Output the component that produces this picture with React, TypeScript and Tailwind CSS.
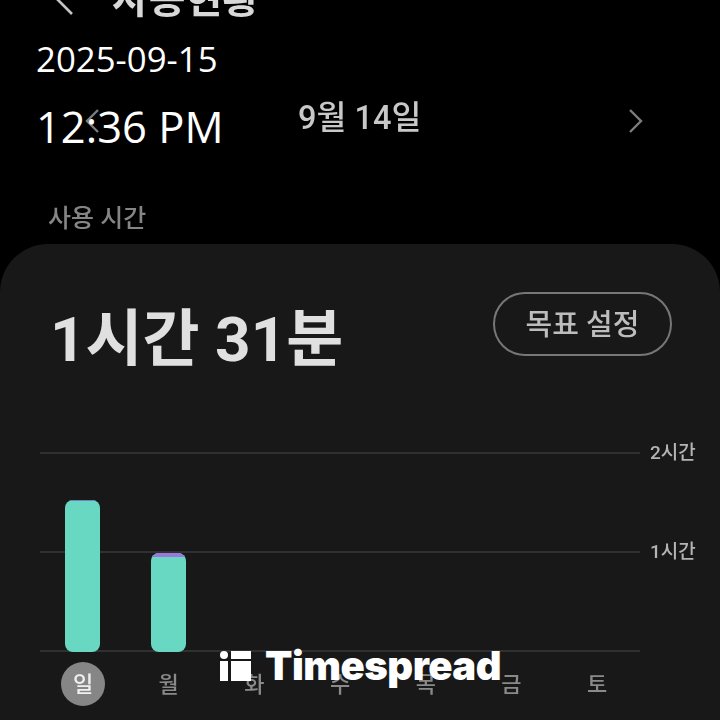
const FONT = '"Roboto", "Noto Sans CJK KR", sans-serif';

const DAYS = [
  { label: "일", active: true, height: 152, cap: "bg-[#6f7fc8]", capH: 1 },
  { label: "월", active: false, height: 99, cap: "bg-[#9a78dc]", capH: 4 },
  { label: "화", active: false, height: 0, cap: "", capH: 0 },
  { label: "수", active: false, height: 0, cap: "", capH: 0 },
  { label: "목", active: false, height: 0, cap: "", capH: 0 },
  { label: "금", active: false, height: 0, cap: "", capH: 0 },
  { label: "토", active: false, height: 0, cap: "", capH: 0 },
];

function Chevron({ dir }: { dir: "left" | "right" }) {
  return (
    <svg width="16" height="26" viewBox="0 0 16 26" fill="none">
      <path
        d={dir === "left" ? "M14 2 L3 13 L14 24" : "M2 2 L13 13 L2 24"}
        stroke="#7d7d7d"
        strokeWidth="2.4"
      />
    </svg>
  );
}

function GridLine({ label }: { label?: string }) {
  return (
    <div className="flex h-[2px] items-center">
      <div className="h-[2px] w-[600px] bg-[#303030]" />
      {label && (
        <span className="ml-[10px] whitespace-nowrap text-[19px] font-medium text-[#b4b4b4]">
          {label}
        </span>
      )}
    </div>
  );
}

function UsageScreen() {
  return (
    <div className="blur-[0.6px]">
      <div className="mt-[-18px] flex h-[36px] items-center pl-[54px]">
        <svg width="20" height="36" viewBox="0 0 20 36" fill="none">
          <path d="M18 2 L3 17 L18 32" stroke="#c4c4c4" strokeWidth="2.6" />
        </svg>
        <span className="ml-[38px] text-[40px] font-bold leading-none text-[#d8d8d8]">
          사용현황
        </span>
      </div>

      <div className="mt-[85px] flex h-[36px] items-center pl-[84px] pr-[76px]">
        <Chevron dir="left" />
        <span className="mb-[6px] ml-[198px] mr-auto whitespace-nowrap text-[32.5px] font-medium leading-none text-[#c8c8c8]">
          9월 14일
        </span>
        <Chevron dir="right" />
      </div>

      <div className="mt-[65px] pl-[48px] text-[25px] font-medium leading-[30px] text-[#858585]">
        사용 시간
      </div>

      <div className="mt-[10px] h-[500px] rounded-t-[48px] bg-[#181818] pl-[40px] pt-[48px]">
        <div className="flex h-[64px] items-center justify-between pr-[48px]">
          <span className="ml-[10px] mt-[32px] text-[62px] font-bold leading-none text-[#e0e0e0]">
            1시간 31분
          </span>
          <button
            type="button"
            className="h-[64px] w-[179px] rounded-full border-2 border-[#777777] pt-[3px] text-[29px] font-medium text-[#bdbdbd]"
          >
            목표 설정
          </button>
        </div>

        <div className="relative mt-[96px] flex h-[200px] flex-col justify-between">
          <GridLine label="2시간" />
          <GridLine label="1시간" />
          <GridLine />
          <div className="absolute bottom-0 left-[25px] flex items-end gap-[51px]">
            {DAYS.slice(0, 2).map((d) => (
              <div
                key={d.label}
                className="w-[35px] overflow-hidden rounded-[8px] bg-[#68d8c2]"
                style={{ height: d.height }}
              >
                <div className={d.cap} style={{ height: d.capH }} />
              </div>
            ))}
          </div>
        </div>

        <div className="mt-[10px] flex pl-[21px]">
          {DAYS.map((d) => (
            <div
              key={d.label}
              className={`mr-[41.7px] flex h-[44px] w-[44px] shrink-0 items-center justify-center rounded-full text-[22px] font-medium ${
                d.active ? "bg-[#868686] font-bold text-[#efefef]" : "text-[#8a8a8a]"
              }`}
            >
              {d.label}
            </div>
          ))}
        </div>
      </div>
    </div>
  );
}

export default function App() {
  return (
    <div
      className="relative h-[720px] w-[720px] overflow-hidden bg-black"
      style={{ fontFamily: FONT }}
    >
      <UsageScreen />

      {/* burned-in timestamp */}
      <div className="absolute left-[36px] top-[38px] font-normal text-white" style={{ fontFamily: '"Open Sans", sans-serif' }}>
        <div className="text-[34.8px] leading-[42px]">2025-09-15</div>
        <div className="mt-[19px] text-[43.5px] leading-[56px]">12:36 PM</div>
      </div>

      {/* watermark */}
      <div className="absolute left-[220px] top-[646px] flex items-center gap-[14px] text-white">
        <svg width="31" height="30" viewBox="0 0 31 30" fill="white">
          <circle cx="4" cy="4" r="4" />
          <rect x="0" y="10" width="8" height="20" />
          <rect x="11" y="0" width="20" height="8" />
          <rect x="11" y="10" width="20" height="20" />
        </svg>
        <span
          className="text-[40px] font-black leading-[40px] tracking-[-0.5px]"
          style={{ fontFamily: '"Inter", sans-serif' }}
        >
          Timespread
        </span>
      </div>
    </div>
  );
}
